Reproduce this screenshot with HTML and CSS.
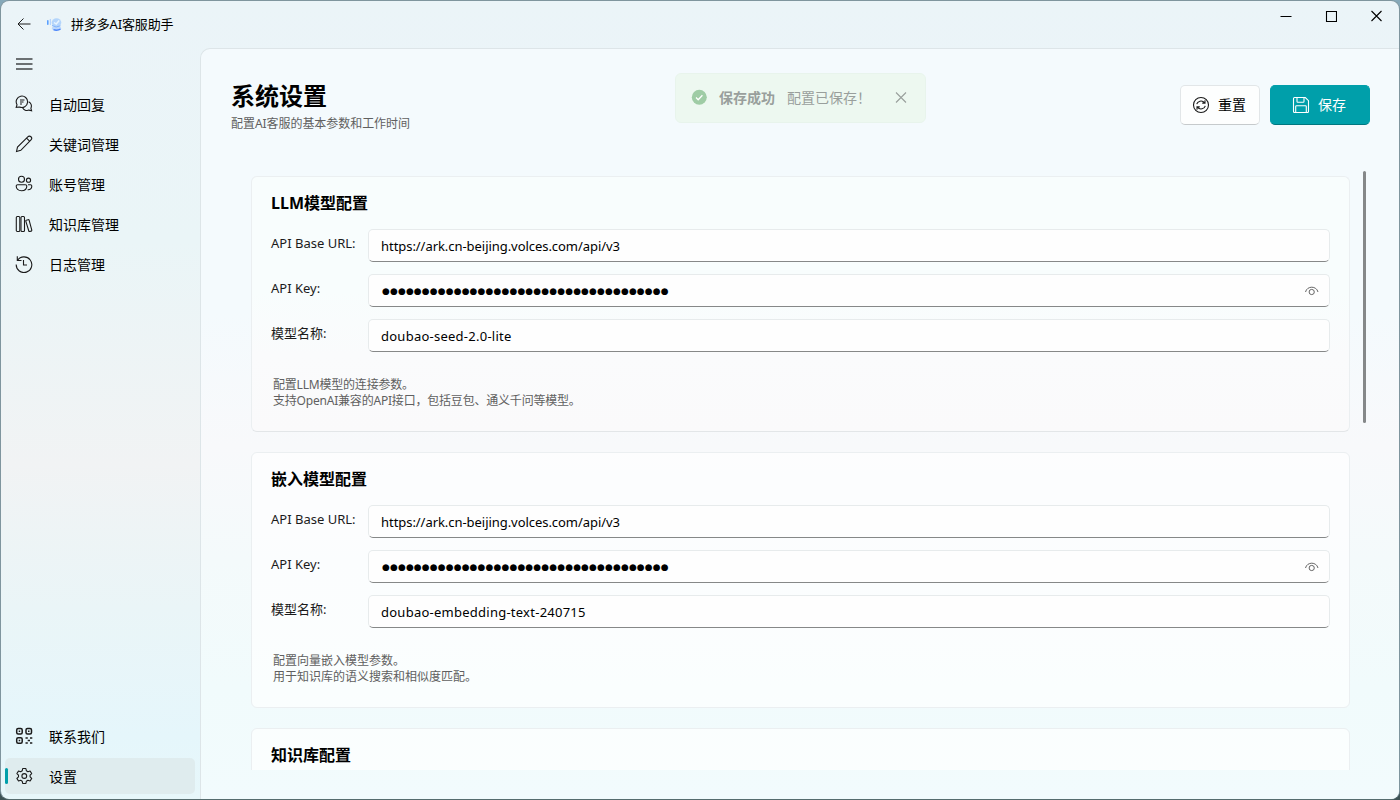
FILE: index.html
```html
<!DOCTYPE html>
<html lang="zh-CN">
<head>
  <meta charset="UTF-8" />
  <title>拼多多AI客服助手</title>
  <link rel="stylesheet" href="styles.css">
</head>
<body>

  <div class="window">
    <header class="titlebar">
      <svg class="back" width="16" height="16" viewBox="0 0 16 16"><path d="M14.500 8H2M7.500 2.500L2 8l5.500 5.500"/></svg>
      <svg class="logo" width="16" height="16" viewBox="0 0 16 16">
        <ellipse cx="9.500" cy="6.500" rx="4.800" ry="4.300" fill="#b4d5fb"/>
        <ellipse cx="9.500" cy="12.300" rx="4.600" ry="2.300" fill="#bcd8fc"/>
        <rect x="0" y="4" width="1.600" height="5" rx=".8" fill="#5aa0ff"/>
        <path d="M3.300 3v6" stroke="#a9cdff" stroke-width="1"/>
        <path d="M7 6.500l2.200 1.500 3-3.500" fill="none" stroke="#e9f5ff" stroke-width="1.500"/>
        <path d="M5 9.500q4 2.800 8.500.3" fill="none" stroke="#7fb2fb" stroke-width="1"/>
        <path d="M6.500 13.700q3.500 1.200 7-.5" fill="none" stroke="#4c86fa" stroke-width="1.400"/>
      </svg>
      <span class="app-name">拼多多AI客服助手</span>
      <div class="window-buttons">
        <svg width="12" height="12" viewBox="0 0 12 12"><path d="M.500 6.500h11"/></svg>
        <svg width="12" height="12" viewBox="0 0 12 12"><path d="M1.500 1.500h10v10h-10z"/></svg>
        <svg width="12" height="12" viewBox="0 0 12 12"><path d="M1.500 1l10 10M11.500 1l-10 10"/></svg>
      </div>
    </header>

    <div class="main">
      <nav class="sidebar">
        <a class="nav-item menu">
          <svg width="18" height="18" viewBox="0 0 18 18"><path d="M1 4h16.500M1 9h16.500M1 14h16.500"/></svg>
        </a>
        <a class="nav-item">
          <svg width="18" height="18" viewBox="0 0 18 18"><path d="M1.200 12.300l.8-2.600A5.700 5.700 0 1 1 4.600 12zM7.500 12.500c1 2.500 4 3.700 6.500 2.600l2.600.7-.7-2.500c1.200-2.600.1-5.500-2.200-6.600M5 5h4.500M5 7h3.500M5 9h2"/></svg>
          <span>自动回复</span>
        </a>
        <a class="nav-item">
          <svg width="18" height="18" viewBox="0 0 18 18"><path d="M1.500 16.500l1-4.400L12.800 1.800a2.100 2.100 0 0 1 3.200 3.100L5.800 15.300zM11.600 3.100l3.200 3.200"/></svg>
          <span>关键词管理</span>
        </a>
        <a class="nav-item">
          <svg width="18" height="18" viewBox="0 0 18 18"><circle cx="6.500" cy="4.200" r="3"/><circle cx="13.500" cy="5.200" r="2.100"/><path d="M2.600 9.800h7.800c.8 0 1.400.6 1.400 1.300 0 2.700-2 4.700-5.300 4.700s-5.300-2-5.300-4.700c0-.7.600-1.300 1.400-1.300zM13 9.800h2.500c.8 0 1.300.5 1.300 1.200 0 2.500-1.600 4-4.200 3.700"/></svg>
          <span>账号管理</span>
        </a>
        <a class="nav-item">
          <svg width="18" height="18" viewBox="0 0 18 18"><rect x="1.300" y="1.500" width="3.500" height="15" rx="1"/><rect x="6" y="1.500" width="3.500" height="15" rx="1"/><path d="M11.200 5.200l2-.5c.5-.1.800.1.900.5l2.700 10c.1.500-.1.800-.5.900l-1.600.4c-.5.100-.8-.1-.9-.5l-3-9.900c-.1-.5 0-.8.400-.9z"/></svg>
          <span>知识库管理</span>
        </a>
        <a class="nav-item">
          <svg width="18" height="18" viewBox="0 0 18 18"><path d="M2.300 1.300v4.200h4.200M2.500 5.400A7.800 7.800 0 1 1 1.200 9.500M8.500 5v5h3.500"/></svg>
          <span>日志管理</span>
        </a>
        <div class="spacer"></div>
        <a class="nav-item">
          <svg class="qr" width="18" height="18" viewBox="0 0 18 18"><rect x="1.700" y="1.500" width="5.500" height="5.500" rx="1.500"/><rect x="11" y="1.500" width="5.500" height="5.500" rx="1.500"/><rect x="1.700" y="10.800" width="5.500" height="5.500" rx="1.500"/><path d="M3.700 4.250h1.500M13 4.250h1.500M3.700 13.500h1.500M10.500 11h2.300M15 11h2.300M12.700 13.500h2.300M10.500 16h2.300M15 16h2.300"/></svg>
          <span>联系我们</span>
        </a>
        <a class="nav-item active">
          <svg width="18" height="18" viewBox="0 0 18 18"><circle cx="9.300" cy="9" r="2.400"/><path stroke-linejoin="round" d="M7.700 1.500h3.200l.5 2.300 1.500.9 2.200-.7 1.600 2.600-1.600 1.600v1.600l1.600 1.600-1.600 2.600-2.200-.7-1.500.9-.5 2.300H7.700l-.5-2.300-1.500-.9-2.200.7-1.600-2.600 1.600-1.600V8.200L1.900 6.600 3.500 4l2.200.7 1.500-.9z"/></svg>
          <span>设置</span>
        </a>
      </nav>

      <section class="content">
        <div class="page-head">
          <div>
            <h1>系统设置</h1>
            <p class="subtitle">配置AI客服的基本参数和工作时间</p>
          </div>
          <div class="actions">
            <button class="btn">
              <svg width="18" height="18" viewBox="0 0 18 18"><circle cx="9" cy="9" r="7.500"/><path d="M4.700 8.200c.8-3 5.200-4.500 8-1.400M13 4.300v2.800h-2.800M13.300 9.800c-.8 3-5.200 4.500-8 1.400M5 13.700v-2.800h2.800"/></svg>
              <span>重置</span>
            </button>
            <button class="btn primary">
              <svg width="18" height="18" viewBox="0 0 18 18"><path d="M2.500 1.500h10.800l3.200 3.200v10.800a1 1 0 0 1-1 1h-13a1 1 0 0 1-1-1v-13a1 1 0 0 1 1-1zM5 1.500v4c0 .5.300.8.800.8h5.400c.5 0 .8-.3.800-.8v-4M3.700 16.500v-6c0-.5.300-.8.800-.8h9c.5 0 .8.300.8.800v6"/></svg>
              <span>保存</span>
            </button>
          </div>
        </div>

        <div class="scroll-area">
          <div class="cards">
            <div class="card">
              <h2>LLM模型配置</h2>
              <div class="field"><label>API Base URL:</label><div class="input url">https://ark.cn-beijing.volces.com/api/v3</div></div>
              <div class="field">
                <label>API Key:</label>
                <div class="input"><span class="dots">●●●●●●●●●●●●●●●●●●●●●●●●●●●●●●●●●●●●</span>
                  <svg class="eye" width="14" height="10" viewBox="0 0 14 10"><path d="M.500 6C2-.400 11.500-.400 13 6"/><circle cx="6.700" cy="6" r="2.600"/></svg>
                </div>
              </div>
              <div class="field"><label>模型名称:</label><div class="input model">doubao-seed-2.0-lite</div></div>
              <p class="hint mixed">配置LLM模型的连接参数。<br>支持OpenAI兼容的API接口，包括豆包、通义千问等模型。</p>
            </div>

            <div class="card">
              <h2>嵌入模型配置</h2>
              <div class="field"><label>API Base URL:</label><div class="input url">https://ark.cn-beijing.volces.com/api/v3</div></div>
              <div class="field">
                <label>API Key:</label>
                <div class="input"><span class="dots">●●●●●●●●●●●●●●●●●●●●●●●●●●●●●●●●●●●●</span>
                  <svg class="eye" width="14" height="10" viewBox="0 0 14 10"><path d="M.500 6C2-.400 11.500-.400 13 6"/><circle cx="6.700" cy="6" r="2.600"/></svg>
                </div>
              </div>
              <div class="field"><label>模型名称:</label><div class="input model">doubao-embedding-text-240715</div></div>
              <p class="hint">配置向量嵌入模型参数。<br>用于知识库的语义搜索和相似度匹配。</p>
            </div>

            <div class="card">
              <h2>知识库配置</h2>
            </div>
          </div>
          <div class="scrollbar"></div>
        </div>

        <div class="toast">
          <svg width="16" height="16" viewBox="0 0 16 16"><circle cx="8.300" cy="8.300" r="7.500" fill="#9fcca5"/><path d="M5 8.500l2.200 2.200 4.200-4.400" fill="none" stroke="#fff" stroke-width="1.300"/></svg>
          <b>保存成功</b>
          <span>配置已保存！</span>
          <svg class="close" width="12" height="12" viewBox="0 0 12 12"><path d="M1 1.500l10 10M11 1.500l-10 10"/></svg>
        </div>
      </section>
    </div>
  </div>

</body>
</html>
```

FILE: styles.css
```css
* {
  box-sizing: border-box;
}

body {
  margin: 0;
  height: 800px;
  overflow: hidden;
  background: linear-gradient(#86a9ba, #3d5355);
  font-family: "Noto Sans", "Noto Sans CJK SC", sans-serif;
  font-size: 14px;
  color: #000;
}

svg {
  flex: none;
  fill: none;
  stroke: #1b1b1b;
  stroke-width: 1.1;
}

h1, h2, p {
  margin: 0;
}

.window {
  display: flex;
  flex-direction: column;
  height: 800px;
  border: 1px solid #7f959e;
  border-bottom-color: #566c6e;
  border-radius: 9px;
  overflow: hidden;
  background: linear-gradient(#ebf4f8 0%, #eaf5f7 30%, #f1f3f4 58%, #eaf5f7 76%, #e5f6fb 92%, #e7f7fa 100%);
}

.titlebar {
  display: flex;
  height: 47px;
  flex: none;
  padding-left: 15px;
}

.back {
  margin-top: 15px;
  stroke-width: 1;
}

.logo {
  margin: 15px 0 0 15px;
  stroke: none;
}

.app-name {
  margin: 12px 0 0 8px;
  font-size: 13px;
  line-height: 22px;
  letter-spacing: -0.15px;
}

.window-buttons {
  display: flex;
  gap: 33px;
  margin: 9px 17px 0 auto;
}

.window-buttons svg {
  stroke: #000;
}

.main {
  display: flex;
  flex: 1;
  min-height: 0;
}

.sidebar {
  display: flex;
  flex-direction: column;
  gap: 4px;
  width: 199px;
  flex: none;
  padding: 0 5px 5px 4px;
}

.nav-item {
  display: flex;
  align-items: center;
  gap: 16px;
  height: 36px;
  padding-left: 10px;
  border-radius: 5px;
  line-height: 20px;
}

.nav-item span {
  padding-top: 2px;
}

.nav-item.menu {
  height: 32px;
  margin-bottom: 2px;
}

.nav-item.menu svg {
  stroke: #6b7072;
  stroke-width: 1.8;
}

.qr {
  stroke-width: 1.5;
}

.nav-item.active {
  position: relative;
  background: #dfecee;
}

.nav-item.active::before {
  content: "";
  position: absolute;
  left: 0;
  top: 10px;
  width: 3px;
  height: 16px;
  border-radius: 2px;
  background: #009faa;
}

.spacer {
  flex: 1;
}

.content {
  position: relative;
  display: flex;
  flex-direction: column;
  flex: 1;
  border: 1px solid #dde5e8;
  border-width: 1px 0 0 1px;
  border-radius: 10px 0 0 0;
  background: linear-gradient(#f4fafd 0%, #f4fafd 35%, #f8f9fb 53%, #f4fafb 68%, #f1fbfc 85%, #f2fbfd 100%);
}

.page-head {
  display: flex;
  justify-content: space-between;
  height: 122px;
  flex: none;
  padding: 29px 29px 0 30px;
}

.page-head h1 {
  font-size: 24px;
  line-height: 36px;
}

.subtitle {
  padding-top: 1px;
  font-size: 12px;
  line-height: 18px;
  letter-spacing: -0.05px;
  color: #606060;
}

.actions {
  display: flex;
  gap: 10px;
  padding-top: 7px;
}

.btn {
  display: flex;
  align-items: center;
  justify-content: center;
  gap: 8px;
  width: 80px;
  height: 40px;
  padding: 0 2px 0 0;
  border: 1px solid #e2e6e8;
  border-bottom-color: #c6cacc;
  border-radius: 5px;
  background: #fdfefe;
  font: inherit;
  line-height: 20px;
}

.btn.primary {
  width: 100px;
  border-color: #009faa;
  border-bottom-color: #007780;
  background: #009faa;
  color: #fff;
}

.primary svg {
  stroke: #fff;
}

.scroll-area {
  display: flex;
  height: 599px;
  overflow: hidden;
  padding-left: 50px;
}

.cards {
  display: flex;
  flex-direction: column;
  gap: 20px;
  width: 1099px;
  padding-top: 5px;
}

.card {
  height: 256px;
  flex: none;
  padding: 14px 19px 0 19px;
  border: 1px solid #ebeff1;
  border-radius: 6px;
  background: rgba(255, 255, 255, 0.65);
}

.card:first-child {
  border-bottom-color: #e3e6e8;
  background: linear-gradient(#f8fdfd, #f8fdfd 45%, #fafbfc 70%, #fafafb);
}

.card h2 {
  margin-bottom: 14px;
  font-size: 16px;
  line-height: 24px;
}

.field {
  display: flex;
  margin-bottom: 12px;
}

.field label {
  width: 97px;
  flex: none;
  padding-top: 4px;
  font-size: 13px;
  line-height: 20px;
  color: #1b1b1b;
}

.input {
  display: flex;
  align-items: center;
  justify-content: space-between;
  flex: 1;
  height: 33px;
  padding: 1px 10px 0 12px;
  border: 1px solid #e7ebec;
  border-bottom-color: #868888;
  border-radius: 5px;
  background: #fefefe;
  font-size: 13px;
}

.url {
  letter-spacing: -0.05px;
}

.model {
  letter-spacing: 0.25px;
}

.dots {
  padding-left: 1px;
  font-family: "DejaVu Sans", sans-serif;
  font-size: 8.9px;
  letter-spacing: 0.22px;
}

.eye {
  stroke: #666;
  stroke-width: 1;
}

.hint {
  margin-top: 25px;
  padding-left: 2px;
  font-size: 12px;
  line-height: 16px;
  color: #606060;
}

.hint.mixed {
  letter-spacing: -0.2px;
}

.scrollbar {
  width: 3px;
  height: 252px;
  margin-left: 13px;
  border-radius: 2px;
  background: #858889;
}

/* success message fading out over the page head */
.toast {
  position: absolute;
  left: 474px;
  top: 24px;
  display: flex;
  align-items: center;
  width: 251px;
  height: 50px;
  padding: 0 18px 2px 15px;
  border: 1px solid #e8f4ec;
  border-radius: 6px;
  background: #edf8f0;
  color: #999f9c;
  white-space: nowrap;
}

.toast b {
  margin: 0 12px;
}

.toast svg {
  stroke: none;
}

.toast .close {
  margin-left: auto;
  stroke: #999f9c;
}
```
